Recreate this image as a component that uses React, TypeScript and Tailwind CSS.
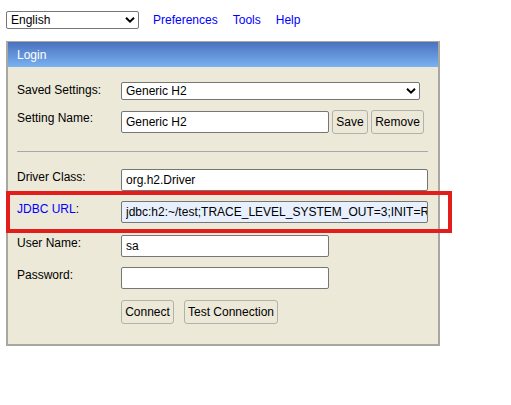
import React from "react";

function Chevron() {
  return (
    <svg width="10" height="7" viewBox="0 0 10 7" className="absolute right-[4px] top-1/2 -translate-y-1/2 pointer-events-none">
      <path d="M1 1.2 L5 5.2 L9 1.2" fill="none" stroke="#000" strokeWidth="2" />
    </svg>
  );
}

function Select({ value, width }: { value: string; width: string }) {
  return (
    <div className={`relative h-[18px] ${width}`}>
      <select
        defaultValue={value}
        className="appearance-none w-full h-full border border-[#767676] rounded-[2px] bg-white pl-[4px] text-[12px] leading-[16px] text-black outline-none"
      >
        <option>{value}</option>
      </select>
      <Chevron />
    </div>
  );
}

function Field({ value, width, highlight }: { value: string; width: string; highlight?: boolean }) {
  return (
    <input
      type="text"
      defaultValue={value}
      className={`h-[22px] ${width} border border-[#767676] rounded-[2px] pl-[4px] text-[12px] text-black outline-none ${highlight ? "bg-[#e8f0fe]" : "bg-white"}`}
    />
  );
}

function Btn({ label, width }: { label: string; width: string }) {
  return (
    <button className={`h-[24px] ${width} border border-[#b3b1aa] rounded-[3px] bg-[#ece9d8] text-[12px] text-black`}>
      {label}
    </button>
  );
}

export default function App() {
  return (
    <div className="relative w-[511px] h-[405px] bg-white text-black text-[12px] font-['Liberation_Sans',Arial,sans-serif]">
      {/* top bar */}
      <div className="flex items-center pt-[11px] pl-[6px] h-[29px]">
        <Select value="English" width="w-[133px]" />
        <a className="ml-[14px] text-[#0000ff]">Preferences</a>
        <a className="ml-[15px] text-[#0000ff]">Tools</a>
        <a className="ml-[15px] text-[#0000ff]">Help</a>
      </div>

      {/* login panel */}
      <div className="ml-[6px] mt-[12px] w-[434px] border-2 border-t border-[#a9a79f] bg-[#ece9d8]">
        <div className="h-[25px] flex items-center pl-[9px] text-white bg-gradient-to-b from-[#4a72bd] to-[#7ab2f1]">
          Login
        </div>
        <div className="pl-[9px] pt-[15px] pb-[20px]">
          <div className="flex items-start">
            <div className="w-[104px] pt-[1px] leading-[14px]">Saved Settings:</div>
            <Select value="Generic H2" width="w-[299px]" />
          </div>
          <div className="flex items-start mt-[10px]">
            <div className="w-[104px] pt-[1px] leading-[14px]">Setting Name:</div>
            <div className="mt-[1px]">
              <Field value="Generic H2" width="w-[208px]" />
            </div>
            <div className="ml-[3px]"><Btn label="Save" width="w-[36px]" /></div>
            <div className="ml-[3px]"><Btn label="Remove" width="w-[53px]" /></div>
          </div>
          <div className="mt-[17px] w-[411px] h-px bg-[#a8a8a8]" />
          <div className="flex items-start mt-[17px]">
            <div className="w-[104px] pt-[1px] leading-[14px]">Driver Class:</div>
            <Field value="org.h2.Driver" width="w-[307px]" />
          </div>
          <div className="flex items-start mt-[10px]">
            <div className="w-[104px] pt-[1px] leading-[14px]">
              <span className="text-[#0000ff]">JDBC URL</span>:
            </div>
            <Field value="jdbc:h2:~/test;TRACE_LEVEL_SYSTEM_OUT=3;INIT=RUNSCRIPT" width="w-[307px]" highlight />
          </div>
          <div className="flex items-start mt-[12px]">
            <div className="w-[104px] pt-[1px] leading-[14px]">User Name:</div>
            <Field value="sa" width="w-[208px]" />
          </div>
          <div className="flex items-start mt-[10px]">
            <div className="w-[104px] pt-[1px] leading-[14px]">Password:</div>
            <Field value="" width="w-[208px]" />
          </div>
          <div className="flex items-start mt-[11px] pl-[104px] gap-[10px]">
            <Btn label="Connect" width="w-[53px]" />
            <Btn label="Test Connection" width="w-[94px]" />
          </div>
        </div>
      </div>

      {/* annotation box */}
      <div className="absolute left-[6px] top-[191px] w-[446px] h-[42px] border-4 border-[#e31c1c] pointer-events-none" />
    </div>
  );
}
